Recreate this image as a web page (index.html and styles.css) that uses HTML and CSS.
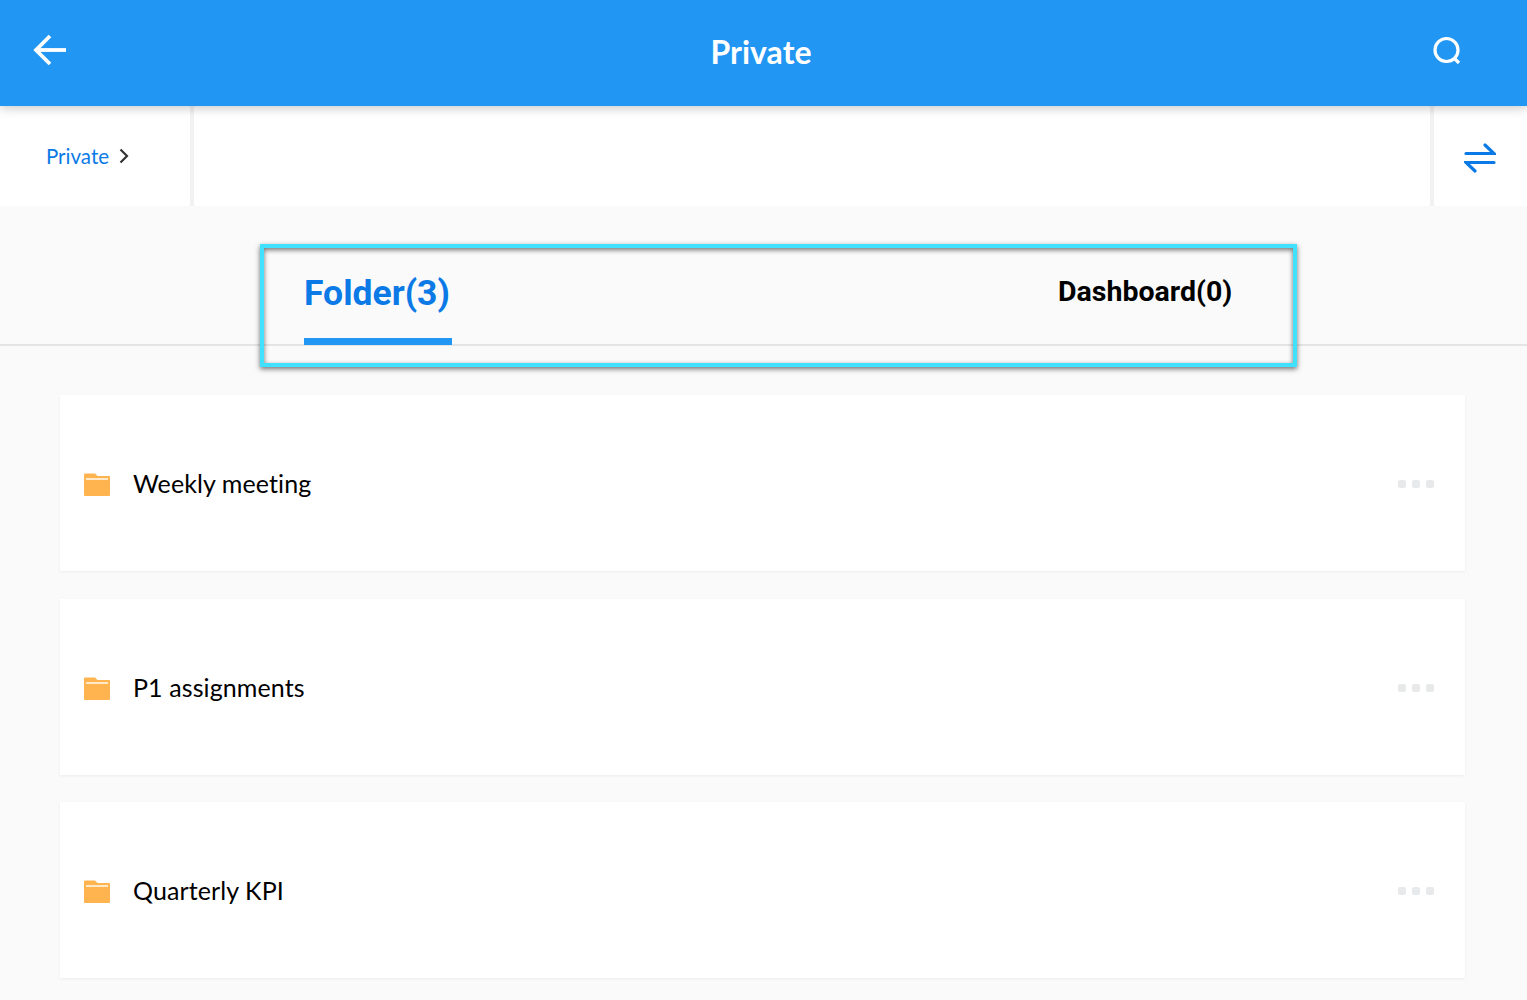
FILE: index.html
```html
<!DOCTYPE html>
<html lang="en">
<head>
    <meta charset="UTF-8">
    <meta name="viewport" content="width=device-width, initial-scale=1.0">
    <title>Private</title>
    <link rel="stylesheet" href="styles.css">
</head>
<body>

    <header class="topbar">
        <svg class="back-icon" width="36" height="36" viewBox="0 0 36 36" fill="none" stroke="#fff" stroke-width="3.8">
            <path d="M34 18H4"/>
            <path d="M18 4L4 18l14 14"/>
        </svg>
        <h1 class="topbar-title">Private</h1>
        <svg class="search-icon" width="30" height="30" viewBox="0 0 30 30" fill="none" stroke="#fff" stroke-width="3.2">
            <circle cx="14.5" cy="14" r="11.5"/>
            <path d="M22 22l5 5"/>
        </svg>
    </header>

    <div class="crumbbar">
        <div class="crumb">
            <span class="crumb-text">Private</span>
            <svg width="10" height="16" viewBox="0 0 10 16" fill="none" stroke="#333" stroke-width="2.2">
                <path d="M1.500 1.500L8 8l-6.500 6.500"/>
            </svg>
        </div>
        <div class="crumb-fill"></div>
        <div class="crumb-sort">
            <svg class="sort-icon" width="32" height="32" viewBox="0 0 32 32" fill="none" stroke="#0b7ae6" stroke-width="3.200" stroke-linecap="round">
                <path d="M2 11.500h28L21 3"/>
                <path d="M30 20.500H2l9 8.500"/>
            </svg>
        </div>
    </div>

    <!-- Tabs -->
    <nav class="tabs">
        <a class="tab tab-active">Folder(3)</a>
        <a class="tab tab-other">Dashboard(0)</a>
    </nav>
    <div class="highlight"></div>

    <main class="list">
        <div class="card">
            <svg class="folder" width="26" height="23" viewBox="0 0 26 23"><use href="#folder"/></svg>
            <span class="card-name">Weekly meeting</span>
            <div class="dots"><i></i><i></i><i></i></div>
        </div>
        <div class="card">
            <svg class="folder" width="26" height="23" viewBox="0 0 26 23"><use href="#folder"/></svg>
            <span class="card-name">P1 assignments</span>
            <div class="dots"><i></i><i></i><i></i></div>
        </div>
        <div class="card">
            <svg class="folder" width="26" height="23" viewBox="0 0 26 23"><use href="#folder"/></svg>
            <span class="card-name">Quarterly KPI</span>
            <div class="dots"><i></i><i></i><i></i></div>
        </div>
    </main>

    <svg width="0" height="0" class="defs">
        <symbol id="folder" viewBox="0 0 26 23">
            <path fill="#ffb44f" d="M0 1.500A1 1 0 0 1 1 .5h10l2.500 2.500H25a1 1 0 0 1 1 1V22a1 1 0 0 1-1 1H1a1 1 0 0 1-1-1z"/>
            <rect x="2" y="5" width="22" height="2" fill="#ffe9c8"/>
        </symbol>
    </svg>

</body>
</html>
```

FILE: styles.css
```css
html, body {
    margin: 0;
    padding: 0;
}
body {
    position: relative;
    height: 1000px;
    overflow: hidden;
    background-color: #fafafa;
    font-family: Lato, "Noto Sans", sans-serif;
    font-variant-ligatures: none;
    color: #000;
}
.defs {
    position: absolute;
}
.topbar {
    position: relative;
    z-index: 2;
    height: 106px;
    display: flex;
    align-items: center;
    padding: 0 65px 0 32px;
    background-color: #2196f3;
    box-shadow: 0 2px 10px rgba(0,0,0,0.22);
}
.back-icon {
    margin-bottom: 6px;
}
.search-icon {
    margin-bottom: 4px;
}
.topbar-title {
    flex: 1;
    margin: 0 0 2px 0;
    padding-left: 22px;
    text-align: center;
    font-size: 32px;
    font-weight: 700;
    color: #fff;
    line-height: 1;
}
.crumbbar {
    height: 100px;
    display: flex;
    gap: 4px;
    background-color: #f1f2f3;
}
.crumb {
    width: 190px;
    box-sizing: border-box;
    padding-left: 46px;
    display: flex;
    align-items: center;
    gap: 10px;
    background-color: #fff;
}
.crumb-text {
    font-size: 20.5px;
    color: #0b7ae6;
}
.crumb-fill {
    flex: 1;
    background-color: #fff;
}
.crumb-sort {
    width: 93px;
    display: flex;
    align-items: center;
    justify-content: center;
    background-color: #fff;
}
.sort-icon {
    margin-top: 3px;
    margin-right: 2px;
}
.tabs {
    height: 140px;
    box-sizing: border-box;
    position: relative;
    border-bottom: 2px solid #e4e4e4;
    font-family: Roboto, sans-serif;
}
.tab {
    position: absolute;
}
.tab-active {
    left: 304px;
    top: 66px;
    width: 148px;
    height: 73px;
    border-bottom: 7px solid #2196f3;
    box-sizing: border-box;
    font-size: 35.5px;
    font-weight: 700;
    color: #0b7ae6;
    white-space: nowrap;
}
.tab-other {
    left: 1058px;
    top: 69px;
    font-size: 28.5px;
    font-weight: 700;
    color: #000;
}
.highlight {
    position: absolute;
    left: 260px;
    top: 244px;
    width: 1037px;
    height: 123px;
    box-sizing: border-box;
    border: 4px solid #40e0ff;
    box-shadow: 0 2px 5px rgba(0,0,0,0.55), inset 0 2px 5px rgba(0,0,0,0.55);
}
.list {
    padding: 49px 62px 0 60px;
    display: flex;
    flex-direction: column;
    gap: 27.5px;
}
.card {
    height: 176px;
    display: flex;
    align-items: center;
    padding: 0 31px 0 24px;
    background-color: #fff;
    box-shadow: 0 1px 3px rgba(0,0,0,0.06);
}
.folder {
    margin-right: 23px;
    margin-top: 3px;
}
.card-name {
    flex: 1;
    font-size: 25px;
    letter-spacing: 0.1px;
}
.dots {
    display: flex;
    gap: 6px;
    margin-top: 2px;
}
.dots i {
    width: 8px;
    height: 8px;
    border-radius: 2px;
    background-color: #e8e9ea;
}
```
